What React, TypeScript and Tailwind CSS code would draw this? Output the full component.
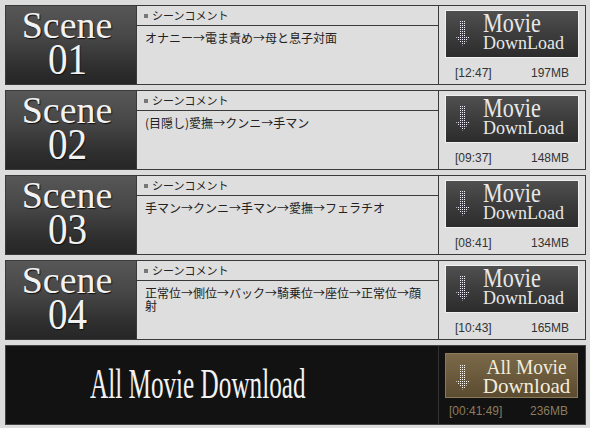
import React from 'react';

const scenes = [
  { no: '01', comment: 'オナニー→電ま責め→母と息子対面', time: '[12:47]', size: '197MB' },
  { no: '02', comment: '(目隠し)愛撫→クンニ→手マン', time: '[09:37]', size: '148MB' },
  { no: '03', comment: '手マン→クンニ→手マン→愛撫→フェラチオ', time: '[08:41]', size: '134MB' },
  { no: '04', comment: '正常位→側位→バック→騎乗位→座位→正常位→顔射', time: '[10:43]', size: '165MB' },
];

const serif = "font-['Liberation_Serif','Times_New_Roman',serif]";
const jp = "font-['Noto_Sans_CJK_JP',sans-serif]";

// dotted down arrow used on the download buttons
const DotArrow: React.FC<{ id: string; color?: string; className?: string }> = ({ id, color = '#f4ecff', className = '' }) => (
  <svg className={className} width="14" height="25" viewBox="0 0 14 25" xmlns="http://www.w3.org/2000/svg">
    <defs>
      <pattern id={id} width="2" height="2" patternUnits="userSpaceOnUse">
        <rect width="1" height="1" fill={color} />
      </pattern>
    </defs>
    <rect x="4" y="0" width="6" height="16" fill={`url(#${id})`} />
    <polygon points="0,16 14,16 7,25" fill={`url(#${id})`} />
  </svg>
);

// arrows are full-width in the original, give them a 1em box
const Comment: React.FC<{ text: string }> = ({ text }) => {
  const parts = text.split('→');
  return (
    <>
      {parts.map((p, i) => (
        <React.Fragment key={i}>
          {i > 0 && <span className="inline-block w-[12px] text-center">→</span>}
          {p}
        </React.Fragment>
      ))}
    </>
  );
};

const SceneRow: React.FC<{ no: string; comment: string; time: string; size: string }> = ({ no, comment, time, size }) => (
  <div className="flex h-[80px] w-[581px] border border-[#3a3a3a] bg-[#dedede]">
    {/* scene number */}
    <div className={`w-[130px] shrink-0 flex flex-col items-center pr-2 text-[#f2f2f2] bg-[linear-gradient(to_bottom,#575757,#474747_40%,#2e2e2e_80%,#262626)] ${serif}`}>
      <div className="text-[38px] leading-[38px] [text-shadow:1px_1px_1px_#111]">Scene</div>
      <div className="text-[45px] leading-[30px] scale-x-[0.87] [text-shadow:1px_1px_1px_#111]">{no}</div>
    </div>

    {/* comment */}
    <div className={`w-[302px] shrink-0 flex flex-col border-l border-[#3a3a3a] text-[#222] ${jp}`}>
      <div className="h-[20px] flex items-center border-b border-[#3a3a3a] pl-[7px] text-[11px]">
        <span className="w-[4px] h-[4px] bg-[#777] mr-[4px]" />
        シーンコメント
      </div>
      <div className="pl-[8px] pr-[11px] pt-[5px] text-[12px] leading-[13px]">
        <Comment text={comment} />
      </div>
    </div>

    {/* download */}
    <div className="flex-1 flex flex-col border-l border-[#3a3a3a] pl-[6px] pt-[4px]">
      <div className="relative w-[134px] h-[48px] border border-[#f0f0f0] bg-[linear-gradient(to_bottom,#505050,#3e3e3e_45%,#2c2c2c)]">
        <DotArrow id={`arr${no}`} className="absolute left-[10px] top-[10px]" />
        <div className={`pl-[37px] text-[#e8e8e8] ${serif}`}>
          <div className="text-[27px] leading-[24px] origin-left scale-x-[0.82]">Movie</div>
          <div className="text-[18px] leading-[16px]">DownLoad</div>
        </div>
      </div>
      <div className="w-[134px] mt-[6px] flex justify-between px-[10px] text-[12px] text-[#333] font-['Liberation_Sans',sans-serif]">
        <span>{time}</span>
        <span>{size}</span>
      </div>
    </div>
  </div>
);

export default function App() {
  return (
    <div className="w-[590px] h-[428px] bg-[#dcdcdc] pt-[5px] pl-[5px] flex flex-col gap-[5px] overflow-hidden">
      {scenes.map((s) => (
        <SceneRow key={s.no} {...s} />
      ))}

      {/* all movie download */}
      <div className="flex h-[80px] w-[581px] border border-[#444] bg-[#121212]">
        <div className="w-[432px] shrink-0 flex items-center pl-[84px] pb-[2px]">
          <span className={`text-[42px] text-[#f2f2f2] origin-left scale-x-[0.6] whitespace-nowrap ${serif}`}>All Movie Download</span>
        </div>
        <div className="flex-1 flex flex-col border-l border-[#333] pl-[6px] pt-[7px]">
          <div className="relative w-[133px] h-[45px] border border-[#8a7a58] bg-[linear-gradient(to_bottom,#7b6a49,#6b5a3c_50%,#5b4b30)]">
            <DotArrow id="arrAll" color="#fff" className="absolute left-[10px] top-[11px]" />
            <div className={`flex flex-col items-center pl-[30px] pt-[3px] text-[#f3ecdc] ${serif}`}>
              <div className="text-[22px] leading-[20px] scale-x-[0.88]">All Movie</div>
              <div className="text-[21px] leading-[18px]">Download</div>
            </div>
          </div>
          <div className="w-[133px] mt-[4px] flex justify-between pl-[4px] pr-[10px] text-[12px] text-[#8c7c5c] font-['Liberation_Sans',sans-serif]">
            <span>[00:41:49]</span>
            <span>236MB</span>
          </div>
        </div>
      </div>
    </div>
  );
}
